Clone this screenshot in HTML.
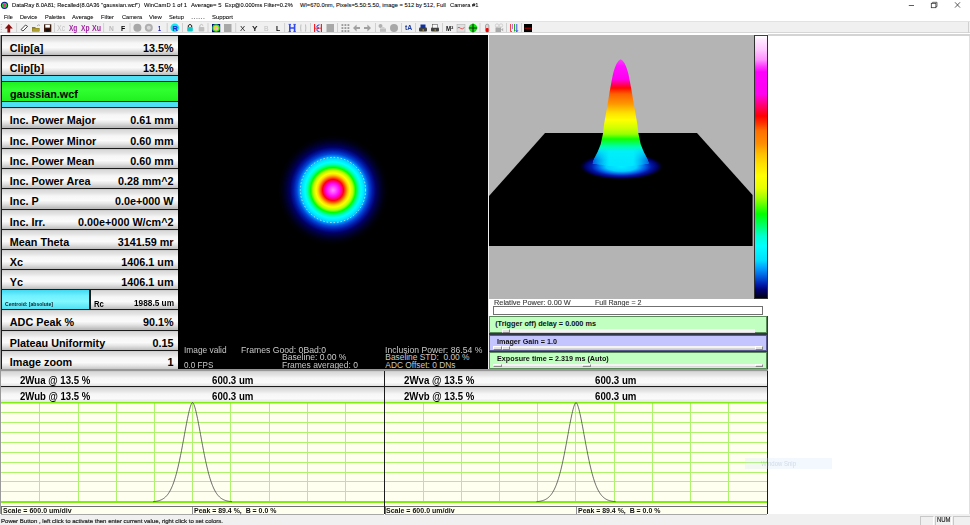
<!DOCTYPE html>
<html><head><meta charset="utf-8"><style>
html,body{margin:0;padding:0;width:970px;height:525px;overflow:hidden;background:#fff;position:relative;font-family:"Liberation Sans", sans-serif}
div,span,svg{position:absolute;box-sizing:border-box}
.t{white-space:pre;line-height:1;transform-origin:0 0}
</style></head><body>
<svg style="left:0;top:0" width="12" height="11"><circle cx="4.5" cy="5.3" r="3.6" fill="#0a1a9a"/><circle cx="4.5" cy="5.3" r="2.6" fill="#20d040"/><circle cx="4.5" cy="5.3" r="1.5" fill="#ff2a80"/></svg>
<span class=t style="left:12.00px;top:3.27px;font-size:5.8px;font-weight:normal;color:#000;transform:scaleX(0.9877);-webkit-text-stroke:0.07px #000;">DataRay 8.0A81; Recalled(8.0A36 "gaussian.wcf")</span>
<span class=t style="left:143.50px;top:3.27px;font-size:5.8px;font-weight:normal;color:#000;transform:scaleX(1.0087);-webkit-text-stroke:0.07px #000;">WinCamD 1 of 1</span>
<span class=t style="left:191.40px;top:3.27px;font-size:5.8px;font-weight:normal;color:#000;transform:scaleX(1.0297);-webkit-text-stroke:0.07px #000;">Average= 5</span>
<span class=t style="left:224.90px;top:3.27px;font-size:5.8px;font-weight:normal;color:#000;transform:scaleX(0.9797);-webkit-text-stroke:0.07px #000;">Exp@0.000ms Filter=0.2%</span>
<span class=t style="left:300.00px;top:3.27px;font-size:5.8px;font-weight:normal;color:#000;-webkit-text-stroke:0.07px #000;">Wl=670.0nm, Pixels=5.50:5.50, image = 512 by 512, Full</span>
<span class=t style="left:450.00px;top:3.27px;font-size:5.8px;font-weight:normal;color:#000;transform:scaleX(0.9935);-webkit-text-stroke:0.07px #000;">Camera #1</span>
<svg style="left:900px;top:0" width="70" height="11"><line x1="8.8" y1="5.5" x2="14" y2="5.5" stroke="#333" stroke-width="0.8"/><rect x="31.3" y="3.3" width="4.6" height="4.4" fill="none" stroke="#333" stroke-width="0.8"/><path d="M32.6 3.3 V2.3 H37 V6.6 H35.9" fill="none" stroke="#333" stroke-width="0.7"/><path d="M55 2.3 L60 7.6 M60 2.3 L55 7.6" stroke="#333" stroke-width="0.8"/></svg>
<span class=t style="left:3.70px;top:13.93px;font-size:6.2px;font-weight:normal;color:#000;transform:scaleX(0.8914);-webkit-text-stroke:0.06px #000;">File</span>
<span class=t style="left:19.80px;top:13.93px;font-size:6.2px;font-weight:normal;color:#000;transform:scaleX(0.9143);-webkit-text-stroke:0.06px #000;">Device</span>
<span class=t style="left:44.80px;top:13.93px;font-size:6.2px;font-weight:normal;color:#000;transform:scaleX(0.9034);-webkit-text-stroke:0.06px #000;">Palettes</span>
<span class=t style="left:72.40px;top:13.93px;font-size:6.2px;font-weight:normal;color:#000;transform:scaleX(0.9373);-webkit-text-stroke:0.06px #000;">Average</span>
<span class=t style="left:100.80px;top:13.93px;font-size:6.2px;font-weight:normal;color:#000;transform:scaleX(0.9455);-webkit-text-stroke:0.06px #000;">Filter</span>
<span class=t style="left:121.80px;top:13.93px;font-size:6.2px;font-weight:normal;color:#000;transform:scaleX(0.9175);-webkit-text-stroke:0.06px #000;">Camera</span>
<span class=t style="left:149.00px;top:13.93px;font-size:6.2px;font-weight:normal;color:#000;transform:scaleX(0.9615);-webkit-text-stroke:0.06px #000;">View</span>
<span class=t style="left:168.80px;top:13.93px;font-size:6.2px;font-weight:normal;color:#000;transform:scaleX(0.9214);-webkit-text-stroke:0.06px #000;">Setup</span>
<span class=t style="left:190.70px;top:13.93px;font-size:6.2px;font-weight:normal;color:#000;transform:scaleX(1.3555);-webkit-text-stroke:0.06px #000;">......</span>
<span class=t style="left:211.50px;top:13.93px;font-size:6.2px;font-weight:normal;color:#000;transform:scaleX(0.9598);-webkit-text-stroke:0.06px #000;">Support</span>
<div style="left:0px;top:21px;width:970px;height:12px;background:#f0f0f0;border-top:1px solid #e2e2e2;border-bottom:1px solid #d6d6d6"></div>
<div style="left:0px;top:33px;width:970px;height:2px;background:#fff"></div>
<div style="left:968px;top:22px;width:1px;height:11px;background:#d0d0d0"></div>
<svg style="left:0;top:21px" width="970" height="14" viewBox="0 21 970 14"><line x1="16.6" y1="23" x2="16.6" y2="32" stroke="#c8c8c8" stroke-width="0.8"/><line x1="54.5" y1="23" x2="54.5" y2="32" stroke="#c8c8c8" stroke-width="0.8"/><line x1="103.6" y1="23" x2="103.6" y2="32" stroke="#c8c8c8" stroke-width="0.8"/><line x1="130" y1="23" x2="130" y2="32" stroke="#c8c8c8" stroke-width="0.8"/><line x1="167.2" y1="23" x2="167.2" y2="32" stroke="#c8c8c8" stroke-width="0.8"/><line x1="182.5" y1="23" x2="182.5" y2="32" stroke="#c8c8c8" stroke-width="0.8"/><line x1="208" y1="23" x2="208" y2="32" stroke="#c8c8c8" stroke-width="0.8"/><line x1="235.7" y1="23" x2="235.7" y2="32" stroke="#c8c8c8" stroke-width="0.8"/><line x1="284.6" y1="23" x2="284.6" y2="32" stroke="#c8c8c8" stroke-width="0.8"/><line x1="310.5" y1="23" x2="310.5" y2="32" stroke="#c8c8c8" stroke-width="0.8"/><line x1="337.5" y1="23" x2="337.5" y2="32" stroke="#c8c8c8" stroke-width="0.8"/><line x1="375.5" y1="23" x2="375.5" y2="32" stroke="#c8c8c8" stroke-width="0.8"/><line x1="401.5" y1="23" x2="401.5" y2="32" stroke="#c8c8c8" stroke-width="0.8"/><line x1="415.5" y1="23" x2="415.5" y2="32" stroke="#c8c8c8" stroke-width="0.8"/><line x1="442.5" y1="23" x2="442.5" y2="32" stroke="#c8c8c8" stroke-width="0.8"/><line x1="480" y1="23" x2="480" y2="32" stroke="#c8c8c8" stroke-width="0.8"/><line x1="506.5" y1="23" x2="506.5" y2="32" stroke="#c8c8c8" stroke-width="0.8"/><line x1="521.5" y1="23" x2="521.5" y2="32" stroke="#c8c8c8" stroke-width="0.8"/><path d="M1.3 24v1M1.3 26.5v1M1.3 29v1M1.3 31.5v0.8" stroke="#aaa" stroke-width="0.7"/><path d="M8.8 24 L12.8 28.6 L10.2 28.6 L10.2 32.6 L7.4 32.6 L7.4 28.6 L4.8 28.6 Z" fill="#8a0a0a"/><path d="M21 29.6 L25.5 25 L27.6 26.4 L23 31 Z" fill="#fff" stroke="#333" stroke-width="0.9"/><path d="M32 27 H35 L36 28 H39.5 V31.5 H32 Z" fill="#8a7a20"/><path d="M32.5 28.5 H40 L39 31.5 H32.5Z" fill="#b0a030"/><path d="M37 26 Q38.5 24 40 25.5" stroke="#888" fill="none" stroke-width="0.7"/><rect x="44" y="24.3" width="7.3" height="7.6" fill="#3a1a0a"/><rect x="45.3" y="24.8" width="4.6" height="2.8" fill="#fff"/><rect x="45.8" y="29" width="3.8" height="2.6" fill="#111"/></svg>
<span class=t style="left:57.30px;top:24.25px;font-size:8.3px;font-weight:normal;color:#c4c4c4;transform:scaleX(0.8465);">Xc</span>
<span class=t style="left:69.00px;top:24.25px;font-size:8.3px;font-weight:bold;color:#a020a0;transform:scaleX(0.7823);">Xg</span>
<span class=t style="left:80.50px;top:24.25px;font-size:8.3px;font-weight:bold;color:#a020a0;transform:scaleX(0.8012);">Xp</span>
<span class=t style="left:92.00px;top:24.25px;font-size:8.3px;font-weight:bold;color:#a020a0;transform:scaleX(0.8483);">Xu</span>
<span class=t style="left:108.50px;top:24.93px;font-size:7.5px;font-weight:bold;color:#bbb;transform:scaleX(0.8853);">N</span>
<span class=t style="left:120.50px;top:24.93px;font-size:7.5px;font-weight:bold;color:#000;transform:scaleX(0.9143);">F</span>
<span class=t style="left:158.30px;top:24.93px;font-size:7.5px;font-weight:bold;color:#1010e0;transform:scaleX(0.7191);">1</span>
<span class=t style="left:240.00px;top:24.80px;font-size:8px;font-weight:normal;color:#111;transform:scaleX(0.9731);">X</span>
<span class=t style="left:251.50px;top:24.80px;font-size:8px;font-weight:bold;color:#222;transform:scaleX(1.0480);">Y</span>
<span class=t style="left:263.50px;top:25.23px;font-size:7.5px;font-weight:normal;color:#c0c0c0;transform:scaleX(0.9171);">B</span>
<span class=t style="left:275.50px;top:25.23px;font-size:7.5px;font-weight:bold;color:#000;transform:scaleX(0.9143);">L</span>
<span class=t style="left:446.00px;top:25.05px;font-size:7px;font-weight:bold;color:#111;transform:scaleX(0.8811);">M²</span>
<span class=t style="left:405.00px;top:25.48px;font-size:6.5px;font-weight:bold;color:#1a3aa0;transform:scaleX(1.0497);">tA</span>
<svg style="left:0;top:21px" width="970" height="14" viewBox="0 21 970 14"><circle cx="137.4" cy="27.8" r="4" fill="#a8a8a8"/><circle cx="148.8" cy="27.8" r="4" fill="#b0b0b0"/><circle cx="148.8" cy="27.8" r="2" fill="#d8d8d8"/><circle cx="174.8" cy="27.8" r="4.3" fill="#10e8f0"/><text x="172.4" y="30.8" font-family="Liberation Sans" font-weight="bold" font-size="7.5" fill="#2020d0">R</text><path d="M188.3 27.2 V25.5 Q190 23.3 191.7 25.5 V27.2" fill="none" stroke="#111" stroke-width="1"/><rect x="187.2" y="27" width="5.6" height="4.6" rx="0.8" fill="#10c8c8"/><path d="M199.8 27.2 V25.5 Q201.5 23.3 203.2 25.5" fill="none" stroke="#bbb" stroke-width="1"/><rect x="198.7" y="27" width="5.6" height="4.6" rx="0.8" fill="#c0c0c0"/><rect x="212" y="24" width="8.2" height="8.2" fill="#001080"/><circle cx="216.1" cy="28.1" r="3.8" fill="#20e040"/><circle cx="216.1" cy="28.1" r="2.6" fill="#e0e020"/><circle cx="216.1" cy="28.1" r="1.4" fill="#ffa0ff"/><rect x="224" y="24" width="7.5" height="8" fill="#a8a8a8"/><path d="M289.8 24.3 V31.7 M294.6 24.3 V31.7 M289.5 28 H295" stroke="#3048f0" stroke-width="1.6" fill="none"/><path d="M288.6 24.4 H291 M288.6 31.6 H291 M293.4 24.4 H295.8 M293.4 31.6 H295.8" stroke="#3048f0" stroke-width="0.9"/><path d="M301 24.5 Q300.3 28 301 31.5 M305.5 24.5 Q306.2 28 305.5 31.5" stroke="#b8b8b8" stroke-width="0.9" fill="none"/><path d="M314.6 24 V32 M321.4 24 V32" stroke="#f02020" stroke-width="1.2"/><path d="M319.5 24.8 Q316.5 25 316.8 27.2 Q317 28 319 28 Q317 28.5 316.8 29.8 Q316.5 31.5 319.5 31.5" stroke="#2030f0" stroke-width="1" fill="none"/><line x1="315" y1="28.2" x2="321" y2="28.2" stroke="#f02020" stroke-width="0.8"/><rect x="326.5" y="24" width="7.5" height="8" fill="#a8a8a8"/><rect x="341.5" y="24.2" width="1.8" height="1.7" fill="#909090"/><rect x="341.5" y="27.2" width="1.8" height="1.7" fill="#909090"/><rect x="341.5" y="30.2" width="1.8" height="1.7" fill="#909090"/><rect x="344.5" y="24.2" width="1.8" height="1.7" fill="#909090"/><rect x="344.5" y="27.2" width="1.8" height="1.7" fill="#909090"/><rect x="344.5" y="30.2" width="1.8" height="1.7" fill="#909090"/><rect x="347.5" y="24.2" width="1.8" height="1.7" fill="#909090"/><rect x="347.5" y="27.2" width="1.8" height="1.7" fill="#909090"/><rect x="347.5" y="30.2" width="1.8" height="1.7" fill="#909090"/><path d="M353 28 L356.6 24.5 V26.9 H360 V29.1 H356.6 V31.5Z" fill="#a0a0a0"/><path d="M371 28 L367.4 24.5 V26.9 H364 V29.1 H367.4 V31.5Z" fill="#a0a0a0"/><circle cx="380.5" cy="26" r="2" fill="#b0b0b0"/><rect x="380" y="28.5" width="6" height="3.3" fill="#c0c0c0"/><rect x="381.5" y="27" width="3" height="2" fill="#d0d0d0"/><circle cx="394" cy="28" r="4" fill="#a8a8a8"/><rect x="419" y="27.5" width="8" height="4" rx="1" fill="#404040"/><rect x="420.5" y="24.5" width="5" height="3.5" fill="#1030a0"/><rect x="422.5" y="29.5" width="1.5" height="1" fill="#e0c000"/><rect x="431" y="27.5" width="8" height="4" rx="1" fill="#404040"/><rect x="432.5" y="24.5" width="5" height="3.5" fill="#f8f8f8" stroke="#444" stroke-width="0.5"/><rect x="434.5" y="29.5" width="1.5" height="1" fill="#e0c000"/><rect x="457" y="24.3" width="8" height="7.8" fill="#e0e0e0" stroke="#aaa" stroke-width="0.5"/><path d="M457.5 28 Q459 26.5 460.5 28.3 Q462 30 464.5 27.5" stroke="#f03030" stroke-width="0.8" fill="none"/><circle cx="473" cy="28" r="4.2" fill="#10e010"/><path d="M468.8 28 H477.2 M473 23.8 V32.2" stroke="#103010" stroke-width="1.1"/><rect x="485.5" y="24.2" width="3.4" height="8" rx="1.6" fill="#d8d8d8" stroke="#666" stroke-width="0.5"/><rect x="485.8" y="28" width="2.8" height="4" rx="1" fill="#f00000"/><circle cx="497" cy="25.5" r="1.7" fill="none" stroke="#c8c8c8" stroke-width="0.8"/><circle cx="501" cy="25.5" r="1.7" fill="none" stroke="#c8c8c8" stroke-width="0.8"/><rect x="495.5" y="27.5" width="5.5" height="4.5" fill="#a8a8a8"/><path d="M501 29.5 L503.2 28 V31.5 Z" fill="#b0b0b0"/><path d="M510.5 24 V31.5 H512" stroke="#f03030" stroke-width="0.9" fill="none"/><path d="M512.5 24 V29" stroke="#c060c0" stroke-width="0.9"/><path d="M514.5 24 V31.5" stroke="#10a010" stroke-width="0.9"/><path d="M516.8 24 V31.5 M515.7 30.3 L516.8 31.8 L517.9 30.3" stroke="#2040f0" stroke-width="0.9" fill="none"/><rect x="524" y="24" width="8" height="8" fill="#000"/><line x1="524.6" y1="28.2" x2="531.4" y2="28.2" stroke="#e00000" stroke-width="0.9"/></svg>
<div style="left:0px;top:35px;width:1px;height:335px;background:#9a9a9a"></div>
<div style="left:1px;top:35px;width:177px;height:335px;background:#1c1c1c"></div>
<div style="left:2px;top:36px;width:176px;height:19px;background:linear-gradient(#c8c8c8 0px,#dadada 1.5px,#e4e4e4 4px,#f6f6f6 7px,#fafafa 11.5px,#e6e6e6 14.5px,#d0d0d0 17px,#bcbcbc 19px)"></div>
<div style="left:2px;top:56px;width:176px;height:19px;background:linear-gradient(#c8c8c8 0px,#dadada 1.5px,#e4e4e4 4px,#f6f6f6 7px,#fafafa 11.5px,#e6e6e6 14.5px,#d0d0d0 17px,#bcbcbc 19px)"></div>
<div style="left:2px;top:76px;width:176px;height:5px;background:#50e0f4"></div>
<div style="left:2px;top:82px;width:176px;height:19px;background:linear-gradient(#20f020,#30ff30 40%,#20f020)"></div>
<div style="left:2px;top:102px;width:176px;height:5px;background:#50e0f4"></div>
<div style="left:2px;top:108px;width:176px;height:20px;background:linear-gradient(#c8c8c8 0px,#dadada 1.5px,#e4e4e4 4px,#f6f6f6 7px,#fafafa 11.5px,#e6e6e6 14.5px,#d0d0d0 17px,#bcbcbc 19px)"></div>
<div style="left:2px;top:129px;width:176px;height:19px;background:linear-gradient(#c8c8c8 0px,#dadada 1.5px,#e4e4e4 4px,#f6f6f6 7px,#fafafa 11.5px,#e6e6e6 14.5px,#d0d0d0 17px,#bcbcbc 19px)"></div>
<div style="left:2px;top:149px;width:176px;height:19px;background:linear-gradient(#c8c8c8 0px,#dadada 1.5px,#e4e4e4 4px,#f6f6f6 7px,#fafafa 11.5px,#e6e6e6 14.5px,#d0d0d0 17px,#bcbcbc 19px)"></div>
<div style="left:2px;top:169px;width:176px;height:19px;background:linear-gradient(#c8c8c8 0px,#dadada 1.5px,#e4e4e4 4px,#f6f6f6 7px,#fafafa 11.5px,#e6e6e6 14.5px,#d0d0d0 17px,#bcbcbc 19px)"></div>
<div style="left:2px;top:189px;width:176px;height:20px;background:linear-gradient(#c8c8c8 0px,#dadada 1.5px,#e4e4e4 4px,#f6f6f6 7px,#fafafa 11.5px,#e6e6e6 14.5px,#d0d0d0 17px,#bcbcbc 19px)"></div>
<div style="left:2px;top:210px;width:176px;height:19px;background:linear-gradient(#c8c8c8 0px,#dadada 1.5px,#e4e4e4 4px,#f6f6f6 7px,#fafafa 11.5px,#e6e6e6 14.5px,#d0d0d0 17px,#bcbcbc 19px)"></div>
<div style="left:2px;top:230px;width:176px;height:19px;background:linear-gradient(#c8c8c8 0px,#dadada 1.5px,#e4e4e4 4px,#f6f6f6 7px,#fafafa 11.5px,#e6e6e6 14.5px,#d0d0d0 17px,#bcbcbc 19px)"></div>
<div style="left:2px;top:250px;width:176px;height:19px;background:linear-gradient(#c8c8c8 0px,#dadada 1.5px,#e4e4e4 4px,#f6f6f6 7px,#fafafa 11.5px,#e6e6e6 14.5px,#d0d0d0 17px,#bcbcbc 19px)"></div>
<div style="left:2px;top:270px;width:176px;height:19px;background:linear-gradient(#c8c8c8 0px,#dadada 1.5px,#e4e4e4 4px,#f6f6f6 7px,#fafafa 11.5px,#e6e6e6 14.5px,#d0d0d0 17px,#bcbcbc 19px)"></div>
<div style="left:2px;top:290px;width:87px;height:19px;background:linear-gradient(#40d8f0,#70f0ff 30%,#80f8ff 60%,#50e0f4)"></div>
<div style="left:90px;top:290px;width:1px;height:19px;background:#1c1c1c"></div>
<div style="left:91px;top:290px;width:87px;height:19px;background:linear-gradient(#c8c8c8 0px,#dadada 1.5px,#e4e4e4 4px,#f6f6f6 7px,#fafafa 11.5px,#e6e6e6 14.5px,#d0d0d0 17px,#bcbcbc 19px)"></div>
<div style="left:2px;top:310px;width:176px;height:20px;background:linear-gradient(#c8c8c8 0px,#dadada 1.5px,#e4e4e4 4px,#f6f6f6 7px,#fafafa 11.5px,#e6e6e6 14.5px,#d0d0d0 17px,#bcbcbc 19px)"></div>
<div style="left:2px;top:331px;width:176px;height:19px;background:linear-gradient(#c8c8c8 0px,#dadada 1.5px,#e4e4e4 4px,#f6f6f6 7px,#fafafa 11.5px,#e6e6e6 14.5px,#d0d0d0 17px,#bcbcbc 19px)"></div>
<div style="left:2px;top:351px;width:176px;height:18px;background:linear-gradient(#c8c8c8 0px,#dadada 1.5px,#e4e4e4 4px,#f6f6f6 7px,#fafafa 11.5px,#e6e6e6 14.5px,#d0d0d0 17px,#bcbcbc 19px)"></div>
<span class=t style="left:9.80px;top:42.92px;font-size:10.8px;font-weight:bold;color:#000;">Clip[a]</span>
<span class=t style="left:142.88px;top:42.92px;font-size:10.8px;font-weight:bold;color:#000;">13.5%</span>
<span class=t style="left:9.80px;top:62.92px;font-size:10.8px;font-weight:bold;color:#000;">Clip[b]</span>
<span class=t style="left:142.88px;top:62.92px;font-size:10.8px;font-weight:bold;color:#000;">13.5%</span>
<span class=t style="left:10.00px;top:88.82px;font-size:10.8px;font-weight:bold;color:#000;">gaussian.wcf</span>
<span class=t style="left:9.80px;top:114.92px;font-size:10.8px;font-weight:bold;color:#000;">Inc. Power Major</span>
<span class=t style="left:130.28px;top:114.92px;font-size:10.8px;font-weight:bold;color:#000;">0.61 mm</span>
<span class=t style="left:9.80px;top:135.92px;font-size:10.8px;font-weight:bold;color:#000;">Inc. Power Minor</span>
<span class=t style="left:130.28px;top:135.92px;font-size:10.8px;font-weight:bold;color:#000;">0.60 mm</span>
<span class=t style="left:9.80px;top:155.92px;font-size:10.8px;font-weight:bold;color:#000;">Inc. Power Mean</span>
<span class=t style="left:130.28px;top:155.92px;font-size:10.8px;font-weight:bold;color:#000;">0.60 mm</span>
<span class=t style="left:9.80px;top:175.92px;font-size:10.8px;font-weight:bold;color:#000;">Inc. Power Area</span>
<span class=t style="left:117.97px;top:175.92px;font-size:10.8px;font-weight:bold;color:#000;">0.28 mm^2</span>
<span class=t style="left:9.80px;top:195.92px;font-size:10.8px;font-weight:bold;color:#000;">Inc. P</span>
<span class=t style="left:114.97px;top:195.92px;font-size:10.8px;font-weight:bold;color:#000;">0.0e+000 W</span>
<span class=t style="left:9.80px;top:216.92px;font-size:10.8px;font-weight:bold;color:#000;">Inc. Irr.</span>
<span class=t style="left:78.05px;top:216.92px;font-size:10.8px;font-weight:bold;color:#000;">0.00e+000 W/cm^2</span>
<span class=t style="left:9.80px;top:236.92px;font-size:10.8px;font-weight:bold;color:#000;">Mean Theta</span>
<span class=t style="left:117.66px;top:236.92px;font-size:10.8px;font-weight:bold;color:#000;">3141.59 mr</span>
<span class=t style="left:9.80px;top:256.92px;font-size:10.8px;font-weight:bold;color:#000;">Xc</span>
<span class=t style="left:121.28px;top:256.92px;font-size:10.8px;font-weight:bold;color:#000;">1406.1 um</span>
<span class=t style="left:9.80px;top:276.92px;font-size:10.8px;font-weight:bold;color:#000;">Yc</span>
<span class=t style="left:121.28px;top:276.92px;font-size:10.8px;font-weight:bold;color:#000;">1406.1 um</span>
<span class=t style="left:9.80px;top:316.92px;font-size:10.8px;font-weight:bold;color:#000;">ADC Peak %</span>
<span class=t style="left:142.88px;top:316.92px;font-size:10.8px;font-weight:bold;color:#000;">90.1%</span>
<span class=t style="left:9.80px;top:337.92px;font-size:10.8px;font-weight:bold;color:#000;">Plateau Uniformity</span>
<span class=t style="left:152.48px;top:337.92px;font-size:10.8px;font-weight:bold;color:#000;">0.15</span>
<span class=t style="left:9.80px;top:356.72px;font-size:10.8px;font-weight:bold;color:#000;">Image zoom</span>
<span class=t style="left:167.48px;top:356.72px;font-size:10.8px;font-weight:bold;color:#000;">1</span>
<span class=t style="left:5.00px;top:302.18px;font-size:5.2px;font-weight:bold;color:#10202a;transform:scaleX(0.9740);">Centroid: [absolute]</span>
<span class=t style="left:94.40px;top:299.96px;font-size:8.4px;font-weight:bold;color:#000;transform:scaleX(0.9236);">Rc</span>
<span class=t style="left:134.00px;top:300.13px;font-size:8.2px;font-weight:bold;color:#000;transform:scaleX(1.0099);">1988.5 um</span>
<div style="left:178px;top:35px;width:310px;height:334px;background:#000"></div>
<div style="left:488px;top:35px;width:1px;height:335px;background:#f0f0f0"></div>
<div style="left:178px;top:35px;width:310px;height:334px;background:radial-gradient(circle at 333px 190px, #ff90ff 0px, #ff50ff 3px, #ff10ff 6px, #ff00b0 8px, #ff0010 10.5px, #ff6000 12.5px, #ffd000 15px, #ffff00 17px, #b0ff00 20px, #00ff00 22.5px, #00ffb0 25.5px, #00ffff 28px, #00e0ff 31px, #00a0ff 33px, #0048d8 36px, #0018a4 39.5px, #000064 43px, #000032 47px, #000010 51px, #000 55px);background-position:-178px -35px;background-size:970px 525px"></div>
<svg style="left:178px;top:35px" width="310" height="334" viewBox="178 35 310 334"><circle cx="333" cy="190" r="32.6" fill="none" stroke="#e8ffff" stroke-opacity="0.75" stroke-width="0.9" stroke-dasharray="1.6 1.9"/></svg>
<span class=t style="left:183.80px;top:346.06px;font-size:8.4px;font-weight:normal;color:#c8c8c8;transform:scaleX(0.9947);">Image valid</span>
<span class=t style="left:240.70px;top:346.06px;font-size:8.4px;font-weight:normal;color:#c8c8c8;transform:scaleX(1.0315);">Frames Good: 0Bad:0</span>
<span class=t style="left:282.00px;top:353.26px;font-size:8.4px;font-weight:normal;color:#c8c8c8;transform:scaleX(1.0261);">Baseline: 0.00 %</span>
<span class=t style="left:183.80px;top:360.76px;font-size:8.4px;font-weight:normal;color:#c8c8c8;transform:scaleX(0.9681);">0.0 FPS</span>
<span class=t style="left:282.00px;top:360.76px;font-size:8.4px;font-weight:normal;color:#c8c8c8;transform:scaleX(1.0140);">Frames averaged: 0</span>
<span class=t style="left:385.30px;top:346.06px;font-size:8.4px;font-weight:normal;color:#c8c8c8;transform:scaleX(1.0295);">Inclusion Power: 86.54 %</span>
<span class=t style="left:385.30px;top:353.26px;font-size:8.4px;font-weight:normal;color:#c8c8c8;">Baseline STD:  0.00 %</span>
<span class=t style="left:385.30px;top:360.76px;font-size:8.4px;font-weight:normal;color:#c8c8c8;">ADC Offset: 0 DNs</span>
<div style="left:178px;top:369px;width:310px;height:1px;background:#a0a0a0"></div>
<div style="left:489px;top:35px;width:265px;height:264px;background:#b4b4b4"></div>
<div style="left:768px;top:35px;width:201px;height:479px;background:#fff"></div>
<div style="left:969px;top:35px;width:1px;height:479px;background:#e0e0e0"></div>
<div style="left:768px;top:34px;width:202px;height:1.5px;background:#d4d4d4"></div>
<div style="left:754px;top:35px;width:14px;height:264px;background:linear-gradient(#ffffff 0px,#ffe8ff 4px,#ffc8ff 14px,#ff90ff 24px,#ff40ff 30px,#ff00ff 36px,#ff00f0 58px,#ff0080 68px,#ff0000 80px,#ff3000 87px,#ff7000 95px,#ff9000 108px,#ffc000 118px,#ffe000 128px,#ffff00 140px,#e8ff00 152px,#a0ff00 162px,#00ff00 178px,#00ff80 192px,#00ffd0 200px,#00ffff 210px,#00e0ff 224px,#00a0ff 232px,#0060e0 240px,#0020b0 248px,#000070 254px,#000010 262px);border:1px solid #303030;border-top-color:#404040"></div>
<svg style="left:489px;top:35px" width="265" height="264" viewBox="489 35 265 264"><polygon points="545,133 697,133 752.6,195 752.6,246 489,246 489,196" fill="#000"/><defs><linearGradient id="pk" x1="0" y1="59" x2="0" y2="177" gradientUnits="userSpaceOnUse"><stop offset="0.000" stop-color="#ff40ff"/><stop offset="0.059" stop-color="#ff10ff"/><stop offset="0.169" stop-color="#ff00f0"/><stop offset="0.212" stop-color="#ff0070"/><stop offset="0.246" stop-color="#ff0800"/><stop offset="0.297" stop-color="#ff6000"/><stop offset="0.381" stop-color="#ff9800"/><stop offset="0.458" stop-color="#ffe000"/><stop offset="0.517" stop-color="#ffff00"/><stop offset="0.585" stop-color="#d0ff00"/><stop offset="0.636" stop-color="#98ff00"/><stop offset="0.678" stop-color="#10ff00"/><stop offset="0.737" stop-color="#00ffa0"/><stop offset="0.780" stop-color="#00f0f8"/><stop offset="0.881" stop-color="#00e8ff"/><stop offset="1.000" stop-color="#00e8ff"/></linearGradient><radialGradient id="sh" cx="0.5" cy="0.5" r="0.5"><stop offset="0" stop-color="#00f0ff"/><stop offset="0.35" stop-color="#00d0ff"/><stop offset="0.55" stop-color="#0060e8"/><stop offset="0.7" stop-color="#0018a8"/><stop offset="0.85" stop-color="#000060"/><stop offset="1" stop-color="#000" stop-opacity="0"/></radialGradient></defs><ellipse cx="621.3" cy="166.5" rx="43" ry="13.5" fill="url(#sh)"/><path d="M620.7 59.3 L618.90 60.50 L617.70 62.00 L616.40 64.00 L614.80 68.00 L613.80 71.00 L612.80 75.00 L611.60 81.00 L610.50 87.00 L609.40 93.00 L608.40 99.50 L606.20 112.00 L604.10 124.00 L603.10 133.00 L600.70 144.30 L597.80 151.40 L595.70 155.70 L594.30 158.60 L593.20 161.50 L592.70 163.50 Q620.7 169 648.7 163.5 L648.70 163.50 L648.20 161.50 L647.10 158.60 L645.70 155.70 L643.60 151.40 L640.70 144.30 L638.30 133.00 L637.30 124.00 L635.20 112.00 L633.00 99.50 L632.00 93.00 L630.90 87.00 L629.80 81.00 L628.60 75.00 L627.60 71.00 L626.60 68.00 L625.00 64.00 L623.70 62.00 L622.50 60.50 Z" fill="url(#pk)"/><defs><linearGradient id="edg" x1="591" y1="0" x2="651" y2="0" gradientUnits="userSpaceOnUse"><stop offset="0" stop-color="#0030d0" stop-opacity="0.9"/><stop offset="0.3" stop-color="#0080f0" stop-opacity="0"/><stop offset="0.7" stop-color="#0080f0" stop-opacity="0"/><stop offset="1" stop-color="#0030d0" stop-opacity="0.9"/></linearGradient><linearGradient id="edv" x1="0" y1="148" x2="0" y2="160" gradientUnits="userSpaceOnUse"><stop offset="0" stop-color="#fff" stop-opacity="0"/><stop offset="1" stop-color="#fff" stop-opacity="1"/></linearGradient><mask id="mk"><rect x="580" y="140" width="90" height="40" fill="url(#edv)"/></mask></defs><path d="M620.7 59.3 L618.90 60.50 L617.70 62.00 L616.40 64.00 L614.80 68.00 L613.80 71.00 L612.80 75.00 L611.60 81.00 L610.50 87.00 L609.40 93.00 L608.40 99.50 L606.20 112.00 L604.10 124.00 L603.10 133.00 L600.70 144.30 L597.80 151.40 L595.70 155.70 L594.30 158.60 L593.20 161.50 L592.70 163.50 Q620.7 169 648.7 163.5 L648.70 163.50 L648.20 161.50 L647.10 158.60 L645.70 155.70 L643.60 151.40 L640.70 144.30 L638.30 133.00 L637.30 124.00 L635.20 112.00 L633.00 99.50 L632.00 93.00 L630.90 87.00 L629.80 81.00 L628.60 75.00 L627.60 71.00 L626.60 68.00 L625.00 64.00 L623.70 62.00 L622.50 60.50 Z" fill="url(#edg)" mask="url(#mk)"/></svg>
<span class=t style="left:494.00px;top:299.82px;font-size:6.8px;font-weight:normal;color:#3a3a3a;transform:scaleX(1.0812);-webkit-text-stroke:0.1px #3a3a3a;">Relative Power: 0.00 W</span>
<span class=t style="left:595.20px;top:299.82px;font-size:6.8px;font-weight:normal;color:#3a3a3a;transform:scaleX(1.0471);-webkit-text-stroke:0.1px #3a3a3a;">Full Range = 2</span>
<div style="left:493px;top:306px;width:270px;height:9px;background:#fff;border:1px solid #707070"></div>
<div style="left:489px;top:316px;width:279px;height:53px;background:#30384a"></div>
<div style="left:489px;top:316px;width:278px;height:17px;background:#c0ffc0;border:1px solid #5a8a5a;border-right-width:1.5px"></div>
<div style="left:489px;top:335px;width:278px;height:16px;background:#c4c4ff;border:1px solid #5a5a90;border-right-width:1.5px"></div>
<div style="left:489px;top:352px;width:278px;height:17px;background:#c0ffc0;border:1px solid #5a8a5a;border-right-width:1.5px"></div>
<div style="left:502px;top:329px;width:253px;height:3.5px;background:#f4f4f4;border-bottom:1px solid #d8d8d8"></div>
<div style="left:493px;top:346.3px;width:262px;height:3.2px;background:#f4f4f4;border-bottom:1px solid #d8d8d8"></div>
<div style="left:493px;top:363.8px;width:262px;height:3.4px;background:#f4f4f4;border-bottom:1px solid #d8d8d8"></div>
<div style="left:501.6px;top:328.5px;width:8.5px;height:4px;background:#e4e4e4;border:0.7px solid #888;border-top-color:#fff;border-left-color:#fff"></div>
<div style="left:493px;top:346px;width:8.5px;height:3.6px;background:#e4e4e4;border:0.7px solid #888;border-top-color:#fff;border-left-color:#fff"></div>
<div style="left:501.6px;top:346px;width:8.5px;height:3.6px;background:#e4e4e4;border:0.7px solid #888;border-top-color:#fff;border-left-color:#fff"></div>
<div style="left:755px;top:346px;width:8.3px;height:3.6px;background:#e4e4e4;border:0.7px solid #888;border-top-color:#fff;border-left-color:#fff"></div>
<div style="left:493px;top:363.5px;width:8.5px;height:3.8px;background:#e4e4e4;border:0.7px solid #888;border-top-color:#fff;border-left-color:#fff"></div>
<div style="left:582px;top:363.5px;width:8.5px;height:3.8px;background:#e4e4e4;border:0.7px solid #888;border-top-color:#fff;border-left-color:#fff"></div>
<div style="left:755px;top:363.5px;width:8.3px;height:3.8px;background:#e4e4e4;border:0.7px solid #888;border-top-color:#fff;border-left-color:#fff"></div>
<span class=t style="left:495.20px;top:320.10px;font-size:7.3px;font-weight:bold;color:#111;">(Trigger off) delay = 0.000 ms</span>
<span class=t style="left:497.30px;top:337.50px;font-size:7.3px;font-weight:bold;color:#111;transform:scaleX(0.9894);">Imager Gain = 1.0</span>
<span class=t style="left:497.30px;top:355.00px;font-size:7.3px;font-weight:bold;color:#111;transform:scaleX(0.9890);">Exposure time = 2.319 ms (Auto)</span>
<div style="left:0px;top:369px;width:768px;height:145px;background:#1c1c1c"></div>
<div style="left:1px;top:369px;width:767px;height:2px;background:#989898"></div>
<div style="left:0px;top:369px;width:1px;height:145px;background:#9a9a9a"></div>
<div style="left:1px;top:371px;width:383px;height:15px;background:linear-gradient(#c8c8c8 0px,#dadada 1.5px,#e4e4e4 4px,#f6f6f6 7px,#fafafa 11.5px,#e6e6e6 14.5px,#d0d0d0 17px,#bcbcbc 19px)"></div>
<div style="left:1px;top:387px;width:383px;height:15px;background:linear-gradient(#c8c8c8 0px,#dadada 1.5px,#e4e4e4 4px,#f6f6f6 7px,#fafafa 11.5px,#e6e6e6 14.5px,#d0d0d0 17px,#bcbcbc 19px)"></div>
<div style="left:385px;top:371px;width:382px;height:15px;background:linear-gradient(#c8c8c8 0px,#dadada 1.5px,#e4e4e4 4px,#f6f6f6 7px,#fafafa 11.5px,#e6e6e6 14.5px,#d0d0d0 17px,#bcbcbc 19px)"></div>
<div style="left:385px;top:387px;width:382px;height:15px;background:linear-gradient(#c8c8c8 0px,#dadada 1.5px,#e4e4e4 4px,#f6f6f6 7px,#fafafa 11.5px,#e6e6e6 14.5px,#d0d0d0 17px,#bcbcbc 19px)"></div>
<span class=t style="left:20.00px;top:375.83px;font-size:10.2px;font-weight:bold;color:#000;transform:scaleX(0.9460);">2Wua @ 13.5 %</span>
<span class=t style="left:20.00px;top:391.83px;font-size:10.2px;font-weight:bold;color:#000;transform:scaleX(0.9391);">2Wub @ 13.5 %</span>
<span class=t style="left:211.90px;top:375.83px;font-size:10.2px;font-weight:bold;color:#000;transform:scaleX(0.9493);">600.3 um</span>
<span class=t style="left:211.90px;top:391.83px;font-size:10.2px;font-weight:bold;color:#000;transform:scaleX(0.9493);">600.3 um</span>
<span class=t style="left:403.80px;top:375.83px;font-size:10.2px;font-weight:bold;color:#000;transform:scaleX(0.9508);">2Wva @ 13.5 %</span>
<span class=t style="left:403.80px;top:391.83px;font-size:10.2px;font-weight:bold;color:#000;transform:scaleX(0.9438);">2Wvb @ 13.5 %</span>
<span class=t style="left:595.30px;top:375.83px;font-size:10.2px;font-weight:bold;color:#000;transform:scaleX(0.9493);">600.3 um</span>
<span class=t style="left:595.30px;top:391.83px;font-size:10.2px;font-weight:bold;color:#000;transform:scaleX(0.9493);">600.3 um</span>
<svg style="left:0;top:0" width="970" height="525"><rect x="1" y="402" width="383" height="112" fill="#fffff0"/><rect x="39" y="402" width="1" height="100" fill="#acf46c"/><rect x="78" y="402" width="1" height="100" fill="#acf46c"/><rect x="116" y="402" width="1" height="100" fill="#acf46c"/><rect x="154" y="402" width="1" height="100" fill="#acf46c"/><rect x="192" y="402" width="1" height="100" fill="#acf46c"/><rect x="230" y="402" width="1" height="100" fill="#acf46c"/><rect x="269" y="402" width="1" height="100" fill="#acf46c"/><rect x="307" y="402" width="1" height="100" fill="#acf46c"/><rect x="345" y="402" width="1" height="100" fill="#acf46c"/><rect x="1" y="412" width="383" height="1" fill="#acf46c"/><rect x="1" y="422" width="383" height="1" fill="#acf46c"/><rect x="1" y="432" width="383" height="1" fill="#acf46c"/><rect x="1" y="442" width="383" height="1" fill="#acf46c"/><rect x="1" y="452" width="383" height="1" fill="#acf46c"/><rect x="1" y="462" width="383" height="1" fill="#acf46c"/><rect x="1" y="472" width="383" height="1" fill="#acf46c"/><rect x="1" y="481" width="383" height="1" fill="#acf46c"/><rect x="1" y="491" width="383" height="1" fill="#acf46c"/><rect x="1" y="402" width="383" height="1.5" fill="#80ee10"/><rect x="1" y="501" width="383" height="2" fill="#80ee10"/><polyline points="153.00,501.65 153.50,501.60 154.00,501.55 154.50,501.50 155.00,501.44 155.50,501.37 156.00,501.29 156.50,501.20 157.00,501.11 157.50,501.01 158.00,500.89 158.50,500.76 159.00,500.62 159.50,500.47 160.00,500.30 160.50,500.11 161.00,499.90 161.50,499.68 162.00,499.43 162.50,499.16 163.00,498.86 163.50,498.54 164.00,498.19 164.50,497.80 165.00,497.39 165.50,496.94 166.00,496.45 166.50,495.92 167.00,495.35 167.50,494.74 168.00,494.07 168.50,493.36 169.00,492.59 169.50,491.77 170.00,490.89 170.50,489.95 171.00,488.95 171.50,487.88 172.00,486.74 172.50,485.54 173.00,484.26 173.50,482.90 174.00,481.47 174.50,479.96 175.00,478.37 175.50,476.70 176.00,474.94 176.50,473.11 177.00,471.19 177.50,469.19 178.00,467.12 178.50,464.96 179.00,462.72 179.50,460.42 180.00,458.04 180.50,455.59 181.00,453.08 181.50,450.52 182.00,447.90 182.50,445.25 183.00,442.55 183.50,439.84 184.00,437.10 184.50,434.36 185.00,431.62 185.50,428.90 186.00,426.22 186.50,423.58 187.00,420.99 187.50,418.49 188.00,416.08 188.50,413.79 189.00,411.63 189.50,409.62 190.00,407.79 190.50,406.17 191.00,404.78 191.50,403.66 192.00,402.86 192.50,402.50 193.00,402.86 193.50,403.66 194.00,404.78 194.50,406.17 195.00,407.79 195.50,409.62 196.00,411.63 196.50,413.79 197.00,416.08 197.50,418.49 198.00,420.99 198.50,423.58 199.00,426.22 199.50,428.90 200.00,431.62 200.50,434.36 201.00,437.10 201.50,439.84 202.00,442.55 202.50,445.25 203.00,447.90 203.50,450.52 204.00,453.08 204.50,455.59 205.00,458.04 205.50,460.42 206.00,462.72 206.50,464.96 207.00,467.12 207.50,469.19 208.00,471.19 208.50,473.11 209.00,474.94 209.50,476.70 210.00,478.37 210.50,479.96 211.00,481.47 211.50,482.90 212.00,484.26 212.50,485.54 213.00,486.74 213.50,487.88 214.00,488.95 214.50,489.95 215.00,490.89 215.50,491.77 216.00,492.59 216.50,493.36 217.00,494.07 217.50,494.74 218.00,495.35 218.50,495.92 219.00,496.45 219.50,496.94 220.00,497.39 220.50,497.80 221.00,498.19 221.50,498.54 222.00,498.86 222.50,499.16 223.00,499.43 223.50,499.68 224.00,499.90 224.50,500.11 225.00,500.30 225.50,500.47 226.00,500.62 226.50,500.76 227.00,500.89 227.50,501.01 228.00,501.11 228.50,501.20 229.00,501.29 229.50,501.37 230.00,501.44 230.50,501.50 231.00,501.55 231.50,501.60 232.00,501.65" fill="none" stroke="#383838" stroke-width="0.75"/><rect x="1" y="506" width="383" height="9" fill="#fffff0"/><rect x="1" y="506" width="383" height="1" fill="#707070"/><rect x="1" y="506" width="1" height="9" fill="#707070"/><rect x="1" y="514" width="383" height="1" fill="#a8a8a8"/><rect x="192" y="507" width="1" height="7" fill="#909090"/><rect x="385" y="402" width="382" height="112" fill="#fffff0"/><rect x="423" y="402" width="1" height="100" fill="#acf46c"/><rect x="461" y="402" width="1" height="100" fill="#acf46c"/><rect x="499" y="402" width="1" height="100" fill="#acf46c"/><rect x="537" y="402" width="1" height="100" fill="#acf46c"/><rect x="575" y="402" width="1" height="100" fill="#acf46c"/><rect x="614" y="402" width="1" height="100" fill="#acf46c"/><rect x="652" y="402" width="1" height="100" fill="#acf46c"/><rect x="690" y="402" width="1" height="100" fill="#acf46c"/><rect x="728" y="402" width="1" height="100" fill="#acf46c"/><rect x="385" y="412" width="382" height="1" fill="#acf46c"/><rect x="385" y="422" width="382" height="1" fill="#acf46c"/><rect x="385" y="432" width="382" height="1" fill="#acf46c"/><rect x="385" y="442" width="382" height="1" fill="#acf46c"/><rect x="385" y="452" width="382" height="1" fill="#acf46c"/><rect x="385" y="462" width="382" height="1" fill="#acf46c"/><rect x="385" y="472" width="382" height="1" fill="#acf46c"/><rect x="385" y="481" width="382" height="1" fill="#acf46c"/><rect x="385" y="491" width="382" height="1" fill="#acf46c"/><rect x="385" y="402" width="382" height="1.5" fill="#80ee10"/><rect x="385" y="501" width="382" height="2" fill="#80ee10"/><polyline points="536.50,501.65 537.00,501.60 537.50,501.55 538.00,501.50 538.50,501.44 539.00,501.37 539.50,501.29 540.00,501.20 540.50,501.11 541.00,501.01 541.50,500.89 542.00,500.76 542.50,500.62 543.00,500.47 543.50,500.30 544.00,500.11 544.50,499.90 545.00,499.68 545.50,499.43 546.00,499.16 546.50,498.86 547.00,498.54 547.50,498.19 548.00,497.80 548.50,497.39 549.00,496.94 549.50,496.45 550.00,495.92 550.50,495.35 551.00,494.74 551.50,494.07 552.00,493.36 552.50,492.59 553.00,491.77 553.50,490.89 554.00,489.95 554.50,488.95 555.00,487.88 555.50,486.74 556.00,485.54 556.50,484.26 557.00,482.90 557.50,481.47 558.00,479.96 558.50,478.37 559.00,476.70 559.50,474.94 560.00,473.11 560.50,471.19 561.00,469.19 561.50,467.12 562.00,464.96 562.50,462.72 563.00,460.42 563.50,458.04 564.00,455.59 564.50,453.08 565.00,450.52 565.50,447.90 566.00,445.25 566.50,442.55 567.00,439.84 567.50,437.10 568.00,434.36 568.50,431.62 569.00,428.90 569.50,426.22 570.00,423.58 570.50,420.99 571.00,418.49 571.50,416.08 572.00,413.79 572.50,411.63 573.00,409.62 573.50,407.79 574.00,406.17 574.50,404.78 575.00,403.66 575.50,402.86 576.00,402.50 576.50,402.86 577.00,403.66 577.50,404.78 578.00,406.17 578.50,407.79 579.00,409.62 579.50,411.63 580.00,413.79 580.50,416.08 581.00,418.49 581.50,420.99 582.00,423.58 582.50,426.22 583.00,428.90 583.50,431.62 584.00,434.36 584.50,437.10 585.00,439.84 585.50,442.55 586.00,445.25 586.50,447.90 587.00,450.52 587.50,453.08 588.00,455.59 588.50,458.04 589.00,460.42 589.50,462.72 590.00,464.96 590.50,467.12 591.00,469.19 591.50,471.19 592.00,473.11 592.50,474.94 593.00,476.70 593.50,478.37 594.00,479.96 594.50,481.47 595.00,482.90 595.50,484.26 596.00,485.54 596.50,486.74 597.00,487.88 597.50,488.95 598.00,489.95 598.50,490.89 599.00,491.77 599.50,492.59 600.00,493.36 600.50,494.07 601.00,494.74 601.50,495.35 602.00,495.92 602.50,496.45 603.00,496.94 603.50,497.39 604.00,497.80 604.50,498.19 605.00,498.54 605.50,498.86 606.00,499.16 606.50,499.43 607.00,499.68 607.50,499.90 608.00,500.11 608.50,500.30 609.00,500.47 609.50,500.62 610.00,500.76 610.50,500.89 611.00,501.01 611.50,501.11 612.00,501.20 612.50,501.29 613.00,501.37 613.50,501.44 614.00,501.50 614.50,501.55 615.00,501.60 615.50,501.65" fill="none" stroke="#383838" stroke-width="0.75"/><rect x="385" y="506" width="382" height="9" fill="#fffff0"/><rect x="385" y="506" width="382" height="1" fill="#707070"/><rect x="385" y="506" width="1" height="9" fill="#707070"/><rect x="385" y="514" width="382" height="1" fill="#a8a8a8"/><rect x="576" y="507" width="1" height="7" fill="#909090"/></svg>
<span class=t style="left:2.80px;top:507.45px;font-size:7px;font-weight:bold;color:#111;transform:scaleX(1.0059);">Scale = 600.0 um/div</span>
<span class=t style="left:194.30px;top:507.45px;font-size:7px;font-weight:bold;color:#111;transform:scaleX(0.9941);">Peak = 89.4 %,  B = 0.0 %</span>
<span class=t style="left:386.30px;top:507.45px;font-size:7px;font-weight:bold;color:#111;transform:scaleX(1.0059);">Scale = 600.0 um/div</span>
<span class=t style="left:577.70px;top:507.45px;font-size:7px;font-weight:bold;color:#111;transform:scaleX(0.9941);">Peak = 89.4 %,  B = 0.0 %</span>
<div style="left:745px;top:458px;width:87px;height:11px;background:rgba(200,225,250,0.22)"></div>
<span class=t style="left:761.00px;top:460.98px;font-size:6.5px;font-weight:normal;color:rgba(90,110,140,0.22);transform:scaleX(0.9226);">Window Snip</span>
<div style="left:0px;top:515px;width:970px;height:10px;background:#f0f0f0"></div>
<div style="left:768px;top:514px;width:202px;height:1px;background:#f0f0f0"></div>
<span class=t style="left:1.00px;top:517.73px;font-size:6.2px;font-weight:normal;color:#222;transform:scaleX(0.9766);-webkit-text-stroke:0.2px #222;">Power Button , left click to activate then enter current value, right click to set colors.</span>
<div style="left:919.5px;top:516px;width:14.5px;height:9px;border:1px solid #c8c8c8;border-right-color:#fff;border-bottom:none"></div>
<div style="left:935.3px;top:516px;width:16.5px;height:9px;border:1px solid #c8c8c8;border-right-color:#fff;border-bottom:none"></div>
<div style="left:953.3px;top:516px;width:16.7px;height:9px;border:1px solid #c8c8c8;border-right:none;border-bottom:none"></div>
<span class=t style="left:936.50px;top:517.42px;font-size:6.8px;font-weight:normal;color:#222;transform:scaleX(0.8718);-webkit-text-stroke:0.15px #222;">NUM</span>
</body></html>
